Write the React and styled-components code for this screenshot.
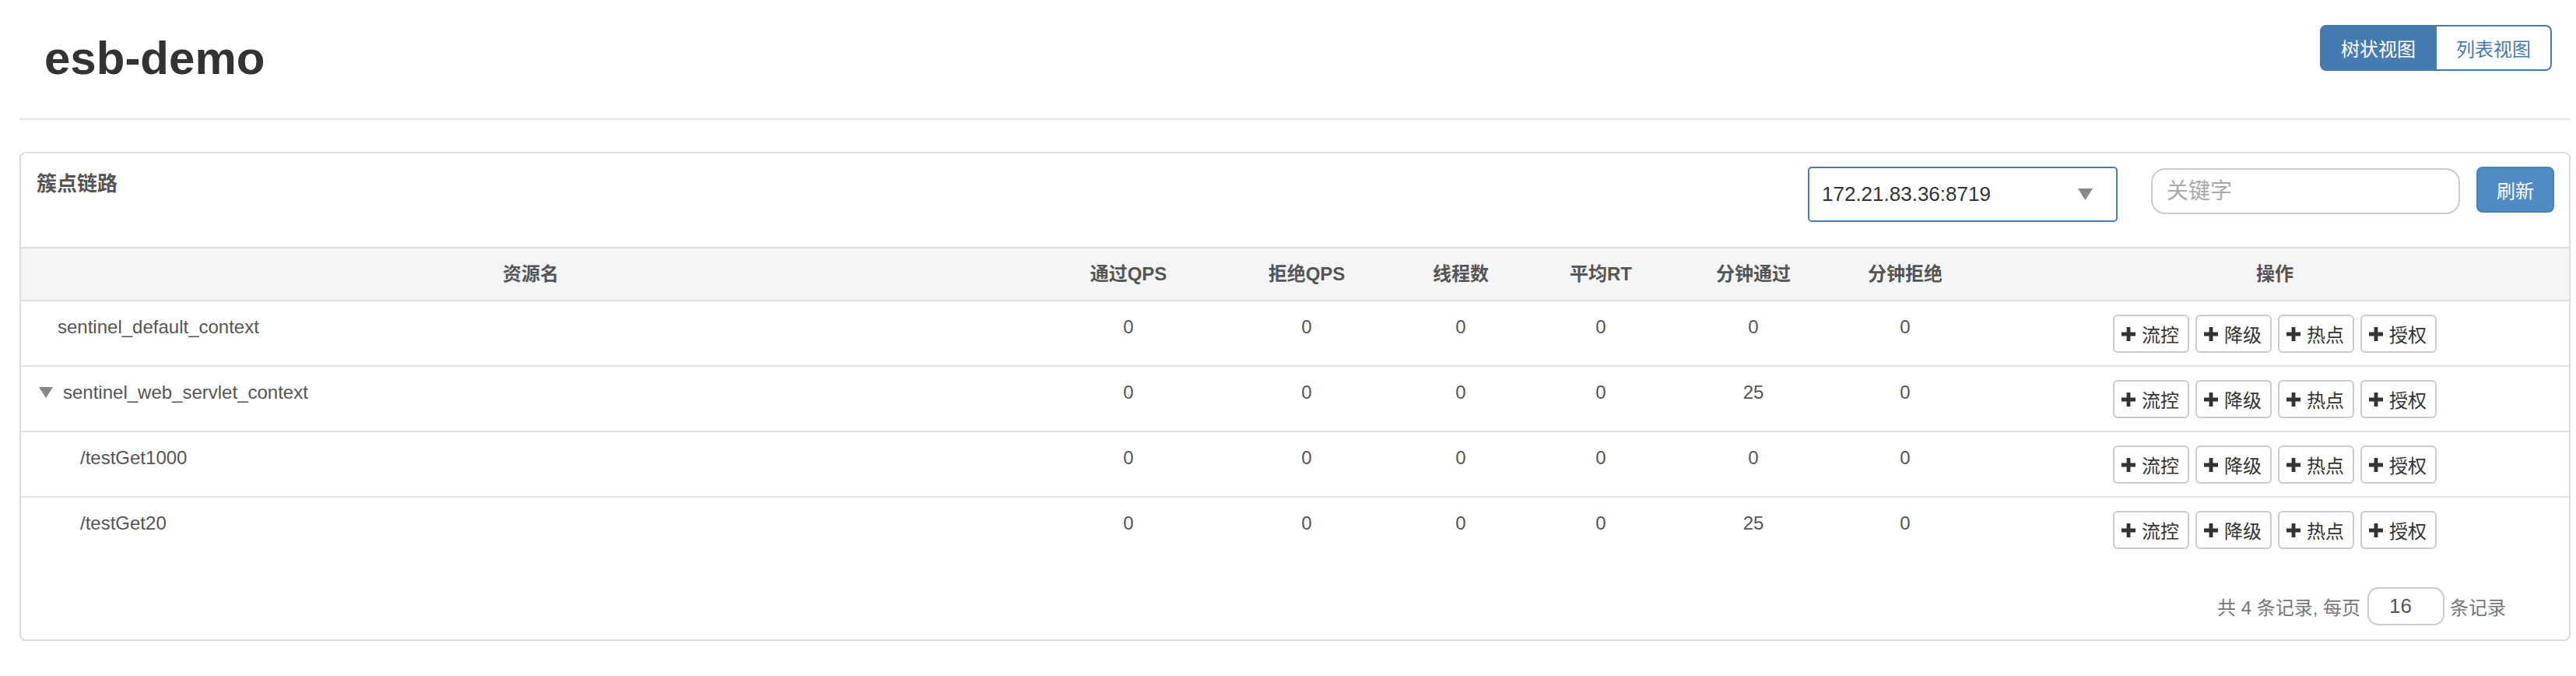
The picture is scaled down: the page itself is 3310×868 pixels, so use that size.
import React from "react";
import styled, { createGlobalStyle } from "styled-components";

const FONT = `"Liberation Sans", "Noto Sans CJK SC", Arial, sans-serif`;

const GlobalStyle = createGlobalStyle`
  html, body { margin: 0; padding: 0; background: #fff; }
  body { font-family: ${FONT}; color: #333; }
  * { box-sizing: border-box; }
`;

const Page = styled.div`
  width: 3310px;
  padding: 0 7px 0 25px;
`;

const Header = styled.header`
  height: 154px;
  display: flex;
  justify-content: space-between;
  align-items: flex-start;
  padding: 32px 24px 0 32px;
  border-bottom: 2px solid #e5e5e5;
`;

const Title = styled.h1`
  margin: 10px 0 0;
  font-size: 60px;
  line-height: 66px;
  font-weight: 700;
  color: #333;
`;

const ToggleGroup = styled.div`
  display: flex;
`;

const ToggleButton = styled.button`
  width: ${(p) => p.$w}px;
  height: 59px;
  padding: 0;
  font-family: ${FONT};
  font-size: 24px;
  border: 2px solid #467ab2;
  background: ${(p) => (p.$active ? "#467ab2" : "#fff")};
  color: ${(p) => (p.$active ? "#fff" : "#467ab2")};
  cursor: pointer;
  &:first-child {
    border-radius: 8px 0 0 8px;
  }
  &:last-child {
    border-radius: 0 8px 8px 0;
    border-left: 0;
  }
`;

const Panel = styled.section`
  margin-top: 41px;
  border: 2px solid #ddd;
  border-radius: 8px;
  overflow: hidden;
`;

const PanelHeading = styled.div`
  height: 120px;
  display: flex;
  align-items: flex-start;
  padding: 17px 19px 0 20px;
`;

const PanelTitle = styled.div`
  flex: 1;
  margin-top: 4px;
  font-size: 26px;
  line-height: 36px;
  font-weight: 700;
  color: #555;
`;

const SelectBox = styled.div`
  width: 398px;
  height: 71px;
  margin-right: 43px;
  display: flex;
  align-items: center;
  justify-content: space-between;
  padding: 0 30px 0 16px;
  border: 2px solid #4a7bb4;
  border-radius: 5px;
  font-size: 26px;
  color: #333;
  background: #fff;
`;

const Caret = styled.svg`
  width: 19px;
  height: 15px;
  fill: #888;
`;

const SearchInput = styled.input`
  width: 397px;
  height: 59px;
  margin: 2px 21px 0 0;
  padding: 0 18px;
  border: 2px solid #ccc;
  border-radius: 18px;
  font-family: ${FONT};
  font-size: 28px;
  color: #555;
  outline: none;
  &::placeholder {
    color: #a9a9a9;
  }
`;

const PrimaryButton = styled.button`
  width: 100px;
  height: 59px;
  padding: 0;
  border: 2px solid #4a80ba;
  border-radius: 8px;
  background: #518bc6;
  color: #fff;
  font-family: ${FONT};
  font-size: 24px;
  cursor: pointer;
`;

const Table = styled.table`
  width: 100%;
  border-collapse: separate;
  border-spacing: 0;
  table-layout: fixed;
`;

const Col = styled.col`
  width: ${(p) => p.$w}px;
`;

const Th = styled.th`
  padding: 0 16px;
  line-height: 66px;
  font-size: 24px;
  font-weight: 700;
  color: #555;
  text-align: center;
  background: #f4f5f7;
  border-top: 2px solid #ddd;
  border-bottom: 2px solid #ddd;
`;

const Tr = styled.tr`
  &:not(:first-child) > td {
    border-top: 2px solid #e0e0e0;
  }
`;

const Td = styled.td`
  padding: 17px 16px 16px;
  line-height: 32px;
  font-size: 24px;
  color: #555;
  vertical-align: top;
  text-align: ${(p) => (p.$left ? "left" : "center")};
`;

const NameCell = styled.div`
  display: flex;
  align-items: center;
  height: 32px;
  padding-left: ${(p) => p.$pad}px;
  gap: 13px;
  white-space: nowrap;
`;

const TreeToggle = styled.svg`
  width: 18px;
  height: 14px;
  fill: #888;
  flex: none;
`;

const Actions = styled.div`
  display: flex;
  justify-content: center;
  gap: 8px;
`;

const ActionButton = styled.button`
  display: inline-flex;
  align-items: center;
  gap: 8px;
  height: 49px;
  padding: 0 11px 0 9px;
  border: 2px solid #ccc;
  border-radius: 6px;
  background: #fff;
  color: #333;
  font-family: ${FONT};
  font-size: 24px;
  cursor: pointer;
`;

const PlusIcon = styled.svg`
  width: 18px;
  height: 18px;
  fill: #333;
  flex: none;
`;

const Pager = styled.div`
  display: flex;
  justify-content: flex-end;
  align-items: center;
  padding: 33px 81px 18px 0;
  font-size: 24px;
  color: #777;
`;

const PageSizeInput = styled.input`
  width: 99px;
  height: 49px;
  margin: 0 7px 0 9px;
  padding: 0 0 0 26px;
  border: 2px solid #ccc;
  border-radius: 14px;
  font-family: ${FONT};
  font-size: 26px;
  color: #555;
  outline: none;
`;

const columns = [
  { label: "资源名", w: 1310 },
  { label: "通过QPS", w: 226 },
  { label: "拒绝QPS", w: 232 },
  { label: "线程数", w: 164 },
  { label: "平均RT", w: 196 },
  { label: "分钟通过", w: 196 },
  { label: "分钟拒绝", w: 194 },
  { label: "操作", w: 756 },
];

const rows = [
  { name: "sentinel_default_context", pad: 31, values: [0, 0, 0, 0, 0, 0] },
  { name: "sentinel_web_servlet_context", pad: 7, expanded: true, values: [0, 0, 0, 0, 25, 0] },
  { name: "/testGet1000", pad: 60, values: [0, 0, 0, 0, 0, 0] },
  { name: "/testGet20", pad: 60, values: [0, 0, 0, 0, 25, 0] },
];

const actions = ["流控", "降级", "热点", "授权"];

const Plus = () => (
  <PlusIcon viewBox="0 0 18 18">
    <path d="M6.6 0h4.8v6.6H18v4.8h-6.6V18H6.6v-6.6H0V6.6h6.6z" />
  </PlusIcon>
);

export default function App() {
  return (
    <>
      <GlobalStyle />
      <Page>
        <Header>
          <Title>esb-demo</Title>
          <ToggleGroup>
            <ToggleButton $w={150} $active>
              树状视图
            </ToggleButton>
            <ToggleButton $w={148}>列表视图</ToggleButton>
          </ToggleGroup>
        </Header>

        <Panel>
          <PanelHeading>
            <PanelTitle>簇点链路</PanelTitle>
            <SelectBox>
              <span>172.21.83.36:8719</span>
              <Caret viewBox="0 0 19 15">
                <path d="M0 0h19L9.5 15z" />
              </Caret>
            </SelectBox>
            <SearchInput placeholder="关键字" />
            <PrimaryButton>刷新</PrimaryButton>
          </PanelHeading>

          <Table>
            <colgroup>
              {columns.map((c) => (
                <Col key={c.label} $w={c.w} />
              ))}
            </colgroup>
            <thead>
              <tr>
                {columns.map((c) => (
                  <Th key={c.label}>{c.label}</Th>
                ))}
              </tr>
            </thead>
            <tbody>
              {rows.map((r) => (
                <Tr key={r.name}>
                  <Td $left>
                    <NameCell $pad={r.pad}>
                      {r.expanded && (
                        <TreeToggle viewBox="0 0 18 14">
                          <path d="M0 0h18L9 14z" />
                        </TreeToggle>
                      )}
                      <span>{r.name}</span>
                    </NameCell>
                  </Td>
                  {r.values.map((v, i) => (
                    <Td key={i}>{v}</Td>
                  ))}
                  <Td>
                    <Actions>
                      {actions.map((a) => (
                        <ActionButton key={a}>
                          <Plus />
                          {a}
                        </ActionButton>
                      ))}
                    </Actions>
                  </Td>
                </Tr>
              ))}
            </tbody>
          </Table>

          <Pager>
            <span>共 4 条记录, 每页</span>
            <PageSizeInput defaultValue="16" />
            <span>条记录</span>
          </Pager>
        </Panel>
      </Page>
    </>
  );
}
